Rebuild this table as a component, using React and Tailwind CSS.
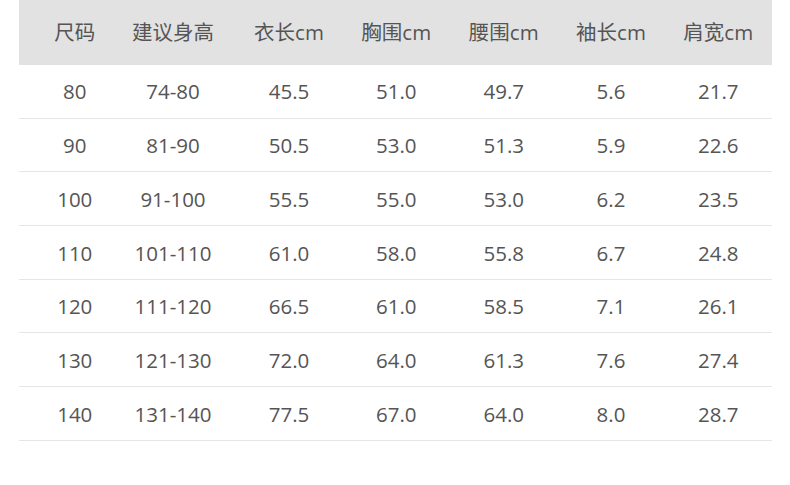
import React from 'react';

const headers = ['尺码', '建议身高', '衣长cm', '胸围cm', '腰围cm', '袖长cm', '肩宽cm'];

const rows = [
  ['80', '74-80', '45.5', '51.0', '49.7', '5.6', '21.7'],
  ['90', '81-90', '50.5', '53.0', '51.3', '5.9', '22.6'],
  ['100', '91-100', '55.5', '55.0', '53.0', '6.2', '23.5'],
  ['110', '101-110', '61.0', '58.0', '55.8', '6.7', '24.8'],
  ['120', '111-120', '66.5', '61.0', '58.5', '7.1', '26.1'],
  ['130', '121-130', '72.0', '64.0', '61.3', '7.6', '27.4'],
  ['140', '131-140', '77.5', '67.0', '64.0', '8.0', '28.7'],
];

const cols = 'grid grid-cols-[106.5px_107px_110px_107.5px_107.5px_107px_107.5px]';
// small nudges so each label sits where the source table put it
const cell = ['text-center pl-[5px]', 'text-center pr-[12px]', 'text-center pl-[3px]', 'text-center', 'text-center', 'text-center', 'text-center'];

export default function App() {
  return (
    <div
      className="w-[790px] h-[485px] bg-white pl-[19px] pr-[18px] text-[#555] text-[20.5px]"
      style={{ fontFamily: '"Open Sans", "Noto Sans CJK SC", sans-serif' }}
    >
      <div className={`${cols} h-[65px] items-center bg-[#e2e2e2]`}>
        {headers.map((h, i) => (
          <div key={h} className={cell[i]}>{h}</div>
        ))}
      </div>
      {rows.map((r) => (
        <div key={r[0]} className={`${cols} h-[53.7px] items-center pt-px border-b border-[#e6e6e6]`}>
          {r.map((c, i) => (
            <div key={i} className={cell[i]}>{c}</div>
          ))}
        </div>
      ))}
    </div>
  );
}
